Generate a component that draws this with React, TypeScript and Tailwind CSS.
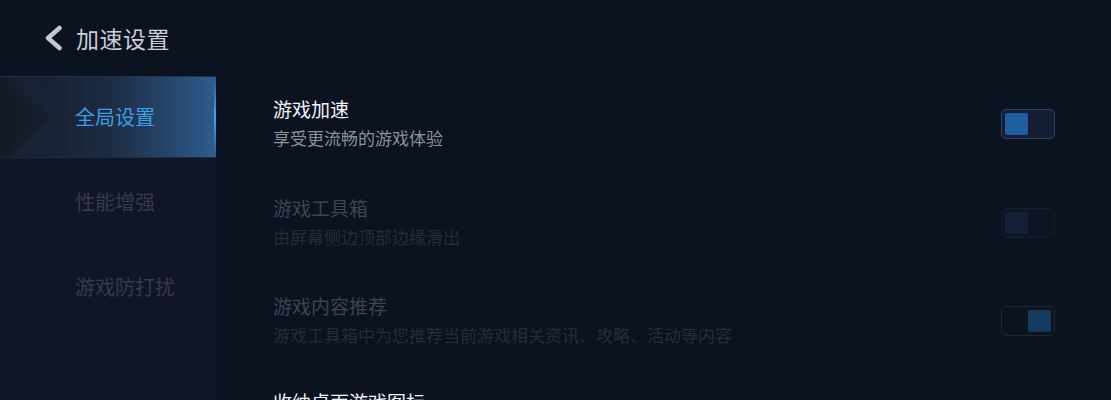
import React from "react";

const FONT = '"Noto Sans CJK SC", "Noto Sans", sans-serif';

function Toggle({ state }: { state: "on" | "dimLeft" | "dimRight" }) {
  if (state === "on") {
    return (
      <div className="w-[54px] h-[30px] rounded-[5px] border-[1.5px] border-[#2c4466] bg-[#141d33] p-[3px] flex">
        <div className="w-[23px] h-full rounded-[2px] bg-[#1d5f9e]" />
      </div>
    );
  }
  if (state === "dimLeft") {
    return (
      <div className="w-[54px] h-[30px] rounded-[5px] border-[1.5px] border-[#161e2c] bg-[#0f1522] p-[3px] flex">
        <div className="w-[23px] h-full rounded-[2px] bg-[#132038]" />
      </div>
    );
  }
  return (
    <div className="w-[54px] h-[30px] rounded-[5px] border-[1.5px] border-[#1b283a] bg-[#0d131f] p-[3px] flex justify-end">
      <div className="w-[23px] h-full rounded-[2px] bg-[#163a5e]" />
    </div>
  );
}

function Row({
  title,
  sub,
  dim,
  toggle,
  extra = "",
}: {
  title: string;
  sub?: string;
  dim?: boolean;
  toggle?: "on" | "dimLeft" | "dimRight";
  extra?: string;
}) {
  return (
    <div className={`flex items-center h-[58px] shrink-0 ${extra}`}>
      <div className="flex-1 flex flex-col self-start">
        <div
          className={`text-[19px] leading-[28px] ${dim ? "text-[#3e4450]" : "text-[#f2f4f7]"}`}
        >
          {title}
        </div>
        {sub && (
          <div
            className={`text-[17px] leading-[30px] ${dim ? "text-[#262c38]" : "text-[#8c919b]"}`}
          >
            {sub}
          </div>
        )}
      </div>
      {toggle && (
        <div className="mr-[56px]">
          <Toggle state={toggle} />
        </div>
      )}
    </div>
  );
}

export default function App() {
  return (
    <div
      className="w-[1111px] h-[400px] overflow-hidden bg-[#0b1220] flex flex-col"
      style={{ fontFamily: FONT }}
    >
      <div className="h-[76px] shrink-0 flex items-center pl-[43px]">
        <svg width="22" height="26" viewBox="0 0 22 26" className="mr-[11px]">
          <polyline
            points="16.5,3 5,13 16.5,23"
            fill="none"
            stroke="#c3c7cf"
            strokeWidth="4.5"
            strokeLinecap="round"
            strokeLinejoin="round"
          />
        </svg>
        <div className="text-[23px] leading-none text-[#c9cdd5] tracking-[0.5px]">
          加速设置
        </div>
      </div>
      <div className="flex flex-1 min-h-0">
        <div className="w-[216px] shrink-0 bg-[#101626] flex flex-col gap-[3px]">
          <div className="relative h-[82px] flex items-center pl-[75px] bg-gradient-to-r from-[#141b28] via-[#1c2b42] to-[#2d5d8e] border-t border-[#22324a] border-b border-b-[#1e2c42]">
            <svg
              className="absolute left-0 top-0"
              width="90"
              height="82"
              viewBox="0 0 90 82"
            >
              <polygon points="0,0 30,0 70,41 30,82 0,82 40,41" fill="#1b2333" opacity="0.7" />
              <polygon points="0,0 10,0 50,41 10,82 0,82" fill="#111824" opacity="0.4" />
            </svg>
            <div className="absolute right-0 top-0 h-full w-[2px] bg-gradient-to-b from-[#2a5a8e] via-[#4aa0f0] to-[#2a5a8e]" />
            <span className="relative text-[20px] text-[#3c9fe4]">全局设置</span>
          </div>
          <div className="h-[82px] flex items-center pl-[75px]">
            <span className="text-[20px] text-[#353b49]">性能增强</span>
          </div>
          <div className="h-[82px] flex items-center pl-[75px]">
            <span className="text-[20px] text-[#353b49]">游戏防打扰</span>
          </div>
        </div>
        <div className="flex-1 flex flex-col pl-[57px] pt-[19px] gap-[40.5px]">
          <Row title="游戏加速" sub="享受更流畅的游戏体验" toggle="on" />
          <Row title="游戏工具箱" sub="由屏幕侧边顶部边缘滑出" dim toggle="dimLeft" />
          <Row
            title="游戏内容推荐"
            sub="游戏工具箱中为您推荐当前游戏相关资讯、攻略、活动等内容"
            dim
            toggle="dimRight"
          />
          <Row title="收纳桌面游戏图标" extra="-mt-[3px]" />
        </div>
      </div>
    </div>
  );
}
